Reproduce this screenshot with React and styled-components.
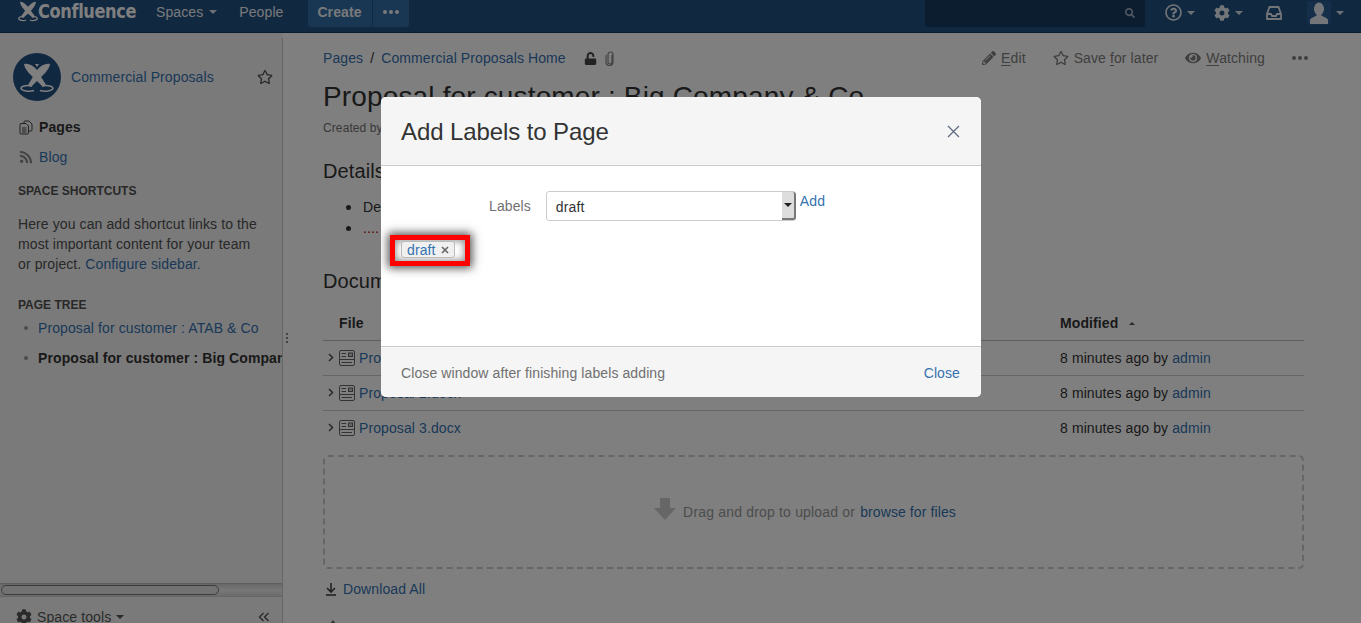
import React from "react";
import styled, { createGlobalStyle } from "styled-components";
import { FaCog, FaEye, FaPencilAlt, FaRegQuestionCircle, FaRegStar, FaRss, FaSearch, FaUnlock } from "react-icons/fa";

const Global = createGlobalStyle`
  html, body { margin: 0; padding: 0; height: 100%; overflow: hidden; }
  body { font-family: "Liberation Sans", Arial, sans-serif; font-size: 14px; letter-spacing: 0.1px; color: #333; background: #fff; }
  * { box-sizing: border-box; }
  a { color: #3572b0; text-decoration: none; }
`;

const Page = styled.div`
  position: relative;
  width: 1361px;
  height: 623px;
  overflow: hidden;
  display: flex;
  flex-direction: column;
`;

const Header = styled.header`
  height: 33px;
  flex: none;
  background: #205081;
  border-bottom: 1px solid #14375c;
  display: flex;
  align-items: flex-start;
  padding-left: 18px;
  color: #f0f3f7;
`;

const Brand = styled.div`
  display: flex;
  align-items: center;
  height: 22px;
  width: 138px;
  color: #fff;
`;

const BrandText = styled.span`
  display: inline-block;
  font-family: "DejaVu Sans Condensed", "DejaVu Sans", sans-serif;
  font-weight: 700;
  font-size: 20px;
  letter-spacing: -0.4px;
  transform: scaleX(0.9);
  transform-origin: left center;
  margin-left: 0;
`;

const NavItem = styled.div`
  height: 24px;
  line-height: 24px;
  margin-right: ${(p) => p.$gap}px;
  display: flex;
  align-items: center;
  gap: 6px;
`;

const Caret = styled.span`
  display: inline-block;
  width: 0;
  height: 0;
  border-left: 4px solid transparent;
  border-right: 4px solid transparent;
  border-top: 4px solid ${(p) => p.$color || "#dbe2ea"};
`;

const CreateGroup = styled.div`
  display: flex;
  height: 27px;
  background: #326ca6;
  border-radius: 0 0 3px 3px;
  font-weight: 700;
  line-height: 24px;
  color: #f0f3f7;
`;

const CreateBtn = styled.div`
  width: 65px;
  text-align: center;
  border-right: 1px solid #205081;
`;

const MoreBtn = styled.div`
  width: 36px;
  display: flex;
  align-items: center;
  justify-content: center;
  gap: 2px;
  height: 24px;
`;

const Dot = styled.i`
  display: block;
  width: 4px;
  height: 4px;
  border-radius: 50%;
  background: ${(p) => p.$color || "#f0f3f7"};
`;

const HeaderRight = styled.div`
  margin-left: auto;
  display: flex;
  align-items: flex-start;
  color: #e6ebf1;
`;

const Search = styled.div`
  width: 220px;
  height: 27px;
  background: #173a5e;
  border-radius: 0 0 3px 3px;
  display: flex;
  align-items: center;
  justify-content: flex-end;
  padding: 0 10px 1px 0;
  margin-right: 20px;
  color: #a9b6c5;
`;

const HeaderIcon = styled.div`
  height: 25px;
  display: flex;
  align-items: center;
  gap: 5px;
  margin-right: ${(p) => p.$gap}px;
`;

const AvatarBox = styled.div`
  width: 24px;
  height: 24px;
  background: #2a5d92;
  border-radius: 0 0 3px 3px;
  display: flex;
  align-items: center;
  justify-content: center;
  overflow: hidden;
`;

const Body = styled.div`
  flex: 1;
  display: flex;
  min-height: 0;
`;

const Sidebar = styled.aside`
  position: relative;
  width: 283px;
  flex: none;
  background: #f5f5f5;
  padding-right: 1px;
  display: flex;
  flex-direction: column;
  &::after {
    content: "";
    position: absolute;
    right: 0;
    top: 5px;
    bottom: 0;
    width: 1px;
    background: #ccc;
  }
`;

const SideScroll = styled.div`
  flex: 1;
  overflow: hidden;
  min-height: 0;
`;

const SpaceHead = styled.div`
  display: flex;
  align-items: center;
  padding: 20px 9px 0 13px;
`;

const SpaceName = styled.a`
  margin-left: 10px;
  flex: 1;
`;

const StarWrap = styled.span`
  color: #555;
  display: flex;
`;

const SideLink = styled.div`
  display: flex;
  align-items: center;
  gap: 6px;
  height: 20px;
  padding-left: 19px;
  margin-top: ${(p) => p.$top}px;
  font-weight: ${(p) => (p.$bold ? 700 : 400)};
`;

const SideHeading = styled.div`
  font-size: 12px;
  font-weight: 700;
  letter-spacing: 0;
  color: #505050;
  padding-left: 18px;
  margin-top: ${(p) => p.$top}px;
  line-height: 16px;
`;

const SideText = styled.p`
  margin: 15px 0 0;
  padding: 0 22px 0 18px;
  line-height: 20px;
  color: #505050;
`;

const TreeList = styled.ul`
  list-style: none;
  margin: 5px 0 0;
  padding: 0 0 0 38px;
  white-space: nowrap;
`;

const TreeItem = styled.li`
  position: relative;
  line-height: 20px;
  margin-bottom: 10px;
  font-weight: ${(p) => (p.$active ? 700 : 400)};
  &::before {
    content: "";
    position: absolute;
    left: -14px;
    top: 8px;
    width: 4px;
    height: 4px;
    border-radius: 50%;
    background: #999;
  }
`;

const ScrollTrack = styled.div`
  flex: none;
  height: 14px;
  background: linear-gradient(#d0d0d0, #f0f0f0 50%, #d8d8d8);
  border-top: 1px solid #bbb;
  border-bottom: 1px solid #ccc;
  padding: 1px 0 0 1px;
`;

const ScrollThumb = styled.div`
  width: 218px;
  height: 10px;
  background: #e4e4e4;
  border: 1px solid #777;
  border-radius: 5px;
`;

const SideFooter = styled.div`
  flex: none;
  height: 26px;
  padding: 14px 12px 0 16px;
  display: flex;
  align-items: center;
  gap: 5px;
  color: #555;
`;

const Collapse = styled.span`
  margin-left: auto;
  display: flex;
  color: #555;
`;

const Grip = styled.div`
  position: absolute;
  right: -5px;
  top: 300px;
  display: flex;
  flex-direction: column;
  gap: 2px;
  i { display: block; width: 2px; height: 2px; background: #888; }
`;

const Main = styled.main`
  flex: 1;
  padding: 14px 57px 0 40px;
  min-width: 0;
  overflow: hidden;
`;

const TopRow = styled.div`
  display: flex;
  align-items: center;
  height: 22px;
`;

const Crumbs = styled.div`
  display: flex;
  align-items: center;
  gap: 7px;
`;

const PageIcons = styled.span`
  display: flex;
  align-items: center;
  gap: 8px;
  margin-left: 11px;
  color: #444;
`;

const Actions = styled.div`
  margin-left: auto;
  display: flex;
  align-items: center;
  color: #808080;
  margin-right: -4px;
`;

const Action = styled.div`
  display: flex;
  align-items: center;
  gap: 5px;
  margin-right: ${(p) => p.$gap}px;
  u { text-underline-offset: 2px; }
`;

const Dots = styled.div`
  display: flex;
  gap: 2px;
`;

const Title = styled.h1`
  margin: 10px 0 0;
  font-weight: 400;
  font-size: 28px;
  letter-spacing: 0.15px;
  line-height: 36px;
  white-space: nowrap;
`;

const Byline = styled.div`
  font-size: 12px;
  color: #707070;
  line-height: 16px;
  margin-top: 5px;
`;

const H2 = styled.h2`
  margin: ${(p) => p.$top}px 0 0;
  font-weight: 400;
  font-size: 20px;
  line-height: 24px;
`;

const Bullets = styled.ul`
  margin: 13px 0 0;
  padding-left: 40px;
  line-height: 21px;
  li { height: 21px; }
  li::marker { font-size: 18px; }
`;

const RedLink = styled.a`
  color: #b40000;
`;

const Table = styled.div`
  margin-top: 15px;
`;

const Row = styled.div`
  display: grid;
  grid-template-columns: 737px 1fr;
  height: 35px;
  align-items: center;
  border-bottom: 1px solid #ccc;
  &:last-child { border-bottom: 0; padding-bottom: 1px; }
`;

const HeadRow = styled(Row)`
  height: 33px;
  padding-bottom: 2px;
  font-weight: 700;
  border-bottom: 1px solid #bbb;
`;

const FileCell = styled.div`
  display: flex;
  align-items: center;
  padding-left: 16px;
  gap: 4px;
`;

const HeadFile = styled.div`
  padding-left: 16px;
`;

const Chevron = styled.span`
  display: flex;
  margin-left: -11px;
  margin-right: 1px;
  margin-top: -2px;
  color: #555;
`;

const SortMark = styled.span`
  display: inline-block;
  margin-left: 11px;
  width: 0;
  height: 0;
  border-left: 3px solid transparent;
  border-right: 3px solid transparent;
  border-bottom: 3px solid #555;
  vertical-align: 3px;
`;

const Drop = styled.div`
  margin-top: 9px;
  height: 114px;
  padding-right: 18px;
  border: 2px dashed #ccc;
  border-radius: 5px;
  display: flex;
  align-items: center;
  justify-content: center;
  gap: 5px;
  color: #999;
`;

const DropText = styled.span`
  letter-spacing: 0.18px;
`;

const DropArrow = styled.svg`
  margin-right: 1px;
  margin-top: -7px;
`;

const DownloadRow = styled.div`
  display: flex;
  align-items: center;
  gap: 6px;
  margin-top: 10px;
  padding-left: 2px;
  height: 20px;
`;

const NextHint = styled.div`
  margin: 21px 0 0 7px;
  width: 0;
  height: 0;
  border-left: 3px solid transparent;
  border-right: 3px solid transparent;
  border-bottom: 4px solid #666;
`;

const Blanket = styled.div`
  position: absolute;
  inset: 0;
  background: rgba(0, 0, 0, 0.5);
`;

const Dialog = styled.div`
  position: absolute;
  left: 381px;
  top: 97px;
  width: 600px;
  height: 300px;
  background: #fff;
  border-radius: 5px;
  display: flex;
  flex-direction: column;
  overflow: hidden;
`;

const DialogHead = styled.div`
  height: 69px;
  flex: none;
  background: #f5f5f5;
  border-bottom: 1px solid #ccc;
  display: flex;
  align-items: center;
  justify-content: space-between;
  padding: 2px 21px 0 20px;
  h2 { margin: 0; font-weight: 400; font-size: 24px; letter-spacing: -0.1px; color: #333; }
`;

const CloseIcon = styled.svg`
  display: block;
  margin-top: -2px;
`;

const DialogBody = styled.div`
  flex: 1;
`;

const FormRow = styled.div`
  display: flex;
  align-items: flex-start;
  padding: 25px 0 0 108px;
`;

const FormLabel = styled.label`
  color: #707070;
  line-height: 30px;
  margin-right: 15px;
`;

const Combo = styled.div`
  position: relative;
  width: 250px;
  height: 30px;
  border: 1px solid #ccc;
  border-radius: 3px;
  line-height: 30px;
  padding-left: 9px;
  color: #333;
`;

const ComboArrow = styled.div`
  position: absolute;
  right: -1px;
  top: 0;
  bottom: 0;
  width: 14px;
  background: #ddd;
  border-right: 2px solid #777;
  border-bottom: 2px solid #777;
  border-radius: 0 3px 3px 0;
  display: flex;
  align-items: center;
  justify-content: center;
`;

const AddLink = styled.a`
  margin-left: 4px;
  line-height: 20px;
`;

const Highlight = styled.div`
  display: inline-flex;
  margin: 14px 0 0 9px;
  padding: 1px 10px 3px 6px;
  border: 5px solid #ff0000;
  background: #fff;
  box-shadow: 0 0 9px 2px rgba(0, 0, 0, 0.7), inset 0 0 7px 1px rgba(0, 0, 0, 0.45);
`;

const Tag = styled.span`
  display: inline-flex;
  align-items: center;
  gap: 5px;
  height: 17px;
  padding: 0 5px;
  border: 1px solid #bbb;
  border-radius: 3px;
  background: #f0f0f0;
  color: #3572b0;
`;

const TagX = styled.svg`
  display: block;
`;

const DialogFoot = styled.div`
  height: 51px;
  flex: none;
  background: #f5f5f5;
  border-top: 1px solid #ccc;
  display: flex;
  align-items: center;
  justify-content: space-between;
  padding: 2px 21px 0 20px;
  color: #707070;
`;

const SpaceLogo = styled.div`
  width: 48px;
  height: 48px;
  flex: none;
  border-radius: 50%;
  background: #205081;
`;

const Swords = ({ size, color }) => (
  <svg width={size} height={size} viewBox="0 0 48 48" fill={color} style={{ display: "block" }}>
    <path d="M11 11 C15 10 20 12 24 17 L33 32 L30 34 L22 26 C17 21 12 17 11 11 Z" />
    <path d="M37 11 C33 10 28 12 24 17 L15 32 L18 34 L26 26 C31 21 36 17 37 11 Z" />
    <path d="M22 11 H26 L24 14 Z" />
    <path d="M19 33 C13 32 8 33 8 35.5 C9 38 16 39 21 37.5 M29 33 C35 32 40 33 40 35.5 C39 38 32 39 27 37.5" fill="none" stroke={color} strokeWidth="1.5" />
  </svg>
);

const HeaderSwords = () => (
  <svg width="20" height="21" viewBox="8 8 32 33" fill="#fff" style={{ display: "block" }}>
    <path d="M11 9 C15 9 20 12 24 17 L35 32 L32 35 L22 26 C17 21 12 16 11 9 Z" />
    <path d="M37 9 C33 9 28 12 24 17 L13 32 L16 35 L26 26 C31 21 36 16 37 9 Z" />
    <path d="M18 33 C13 32 9 33 9 36 C10 39 17 40 21 38 M30 33 C35 32 39 33 39 36 C38 39 31 40 27 38" fill="none" stroke="#fff" strokeWidth="2" />
  </svg>
);

const InboxIcon = () => (
  <svg width="16" height="14" viewBox="0 0 16 14" fill="none" stroke="#e6ebf1" strokeWidth="1.8" style={{ display: "block" }}>
    <path d="M3.5 1 H12.5 L15 8 V13 H1 V8 Z" />
    <path d="M1 8 H5 L6 10 H10 L11 8 H15" />
  </svg>
);

const AvatarIcon = () => (
  <svg width="20" height="22" viewBox="0 0 20 22" fill="#e6ebf1" style={{ display: "block" }}>
    <ellipse cx="10" cy="7" rx="5" ry="6.5" />
    <path d="M1 22 V18 C1 16 6 15 8 13 H12 C14 15 19 16 19 18 V22 Z" />
  </svg>
);

const PagesIcon = () => (
  <svg width="14" height="15" viewBox="0 0 14 15" fill="none" stroke="#444" strokeWidth="1">
    <path d="M1 4.5 Q1 3.5 2 3.5 H7 L9.5 6 V13 Q9.5 14 8.5 14 H2 Q1 14 1 13 Z" />
    <path d="M5 3.5 V2 Q5 1 6 1 H10 L13 4 V10 Q13 11 12 11 H9.5" />
    <path d="M3 8 H7.5 M3 10 H7.5 M3 12 H7.5" />
  </svg>
);

const ClipIcon = () => (
  <svg width="10" height="15" viewBox="0 0 10 15" fill="none" stroke="#888" strokeWidth="1.2">
    <path d="M7 4 V11 A2 2 0 0 1 3 11 V3.5 A2.5 2.5 0 0 1 8 3.5 V11 A3.5 3.5 0 0 1 1 11 V4" />
  </svg>
);

const FileIcon = () => (
  <svg width="16" height="16" viewBox="0 0 16 16" fill="none" stroke="#666" strokeWidth="1">
    <rect x="0.5" y="0.5" width="15" height="15" rx="1.5" />
    <path d="M2.5 3.5 H7 M2.5 6.5 H7 M0.5 9.5 H15.5 M2.5 12.5 H13" />
    <rect x="9.5" y="3" width="4" height="3.5" fill="#ccc" />
  </svg>
);

const ChevronIcon = () => (
  <svg width="6" height="9" viewBox="0 0 6 9" fill="none" stroke="currentColor" strokeWidth="1.5">
    <path d="M1 1 L4.5 4.5 L1 8" />
  </svg>
);

const files = ["Proposal 1.docx", "Proposal 2.docx", "Proposal 3.docx"];

const App = () => (
  <Page>
    <Global />
    <Header>
      <Brand>
        <HeaderSwords />
        <BrandText>Confluence</BrandText>
      </Brand>
      <NavItem $gap={22}>Spaces <Caret /></NavItem>
      <NavItem $gap={24}>People</NavItem>
      <CreateGroup>
        <CreateBtn>Create</CreateBtn>
        <MoreBtn><Dot /><Dot /><Dot /></MoreBtn>
      </CreateGroup>
      <HeaderRight>
        <Search><FaSearch size={10} /></Search>
        <HeaderIcon $gap={19}><FaRegQuestionCircle size={17} /><Caret /></HeaderIcon>
        <HeaderIcon $gap={23}><FaCog size={16} /><Caret /></HeaderIcon>
        <HeaderIcon $gap={25}><InboxIcon /></HeaderIcon>
        <HeaderIcon $gap={17}><AvatarBox><AvatarIcon /></AvatarBox><Caret /></HeaderIcon>
      </HeaderRight>
    </Header>
    <Body>
      <Sidebar>
        <SideScroll>
          <SpaceHead>
            <SpaceLogo><Swords size={48} color="#fff" /></SpaceLogo>
            <SpaceName>Commercial Proposals</SpaceName>
            <StarWrap><FaRegStar size={16} /></StarWrap>
          </SpaceHead>
          <SideLink $top={16} $bold><PagesIcon /> Pages</SideLink>
          <SideLink $top={10}><FaRss size={14} color="#888" /> <a>Blog</a></SideLink>
          <SideHeading $top={16}>SPACE SHORTCUTS</SideHeading>
          <SideText>
            Here you can add shortcut links to the most important content for your team or project. <a>Configure sidebar.</a>
          </SideText>
          <SideHeading $top={23}>PAGE TREE</SideHeading>
          <TreeList>
            <TreeItem><a>Proposal for customer : ATAB &amp; Co</a></TreeItem>
            <TreeItem $active>Proposal for customer : Big Company &amp; Co</TreeItem>
          </TreeList>
        </SideScroll>
        <ScrollTrack><ScrollThumb /></ScrollTrack>
        <SideFooter>
          <FaCog size={16} /> Space tools <Caret $color="#555" />
          <Collapse>
            <svg width="12" height="10" viewBox="0 0 12 10" fill="none" stroke="currentColor" strokeWidth="1.4">
              <path d="M5.5 1 L1.5 5 L5.5 9 M10.5 1 L6.5 5 L10.5 9" />
            </svg>
          </Collapse>
        </SideFooter>
        <Grip><i /><i /><i /></Grip>
      </Sidebar>
      <Main>
        <TopRow>
          <Crumbs>
            <a>Pages</a> / <a>Commercial Proposals Home</a>
            <PageIcons><FaUnlock size={13} /><ClipIcon /></PageIcons>
          </Crumbs>
          <Actions>
            <Action $gap={27}><FaPencilAlt size={14} /><span><u>E</u>dit</span></Action>
            <Action $gap={27}><FaRegStar size={16} /><span>Save <u>f</u>or later</span></Action>
            <Action $gap={27}><FaEye size={16} /><span><u>W</u>atching</span></Action>
            <Dots><Dot $color="#808080" /><Dot $color="#808080" /><Dot $color="#808080" /></Dots>
          </Actions>
        </TopRow>
        <Title>Proposal for customer : Big Company &amp; Co</Title>
        <Byline>Created by admin</Byline>
        <H2 $top={23}>Details</H2>
        <Bullets>
          <li>Details</li>
          <li><RedLink>....</RedLink></li>
        </Bullets>
        <H2 $top={31}>Documents</H2>
        <Table>
          <HeadRow>
            <HeadFile>File</HeadFile>
            <div>Modified<SortMark /></div>
          </HeadRow>
          {files.map((name) => (
            <Row key={name}>
              <FileCell>
                <Chevron><ChevronIcon /></Chevron>
                <FileIcon />
                <a>{name}</a>
              </FileCell>
              <div>8 minutes ago by <a>admin</a></div>
            </Row>
          ))}
        </Table>
        <Drop>
          <DropArrow width="24" height="24" viewBox="0 0 24 24" fill="#ccc">
            <path d="M7 1 H17 V11 H23 L12 23 L1 11 H7 Z" />
          </DropArrow>
          <DropText>Drag and drop to upload or</DropText> <a>browse for files</a>
        </Drop>
        <DownloadRow>
          <svg width="12" height="13" viewBox="0 0 12 13" fill="none" stroke="#444">
            <path d="M6 0 V8 M2 5 L6 9 L10 5" strokeWidth="1.6" />
            <path d="M1 12 H11" strokeWidth="1.6" />
          </svg>
          <a>Download All</a>
        </DownloadRow>
        <NextHint />
      </Main>
    </Body>
    <Blanket />
    <Dialog>
      <DialogHead>
        <h2>Add Labels to Page</h2>
        <CloseIcon width="13" height="13" viewBox="0 0 13 13" stroke="#5e6c84" strokeWidth="1.3">
          <path d="M1 1 L12 12 M12 1 L1 12" />
        </CloseIcon>
      </DialogHead>
      <DialogBody>
        <FormRow>
          <FormLabel>Labels</FormLabel>
          <Combo>
            draft
            <ComboArrow><Caret $color="#222" /></ComboArrow>
          </Combo>
          <AddLink>Add</AddLink>
        </FormRow>
        <Highlight>
          <Tag>
            draft
            <TagX width="8" height="8" viewBox="0 0 8 8" stroke="#666" strokeWidth="1.6">
              <path d="M1 1 L7 7 M7 1 L1 7" />
            </TagX>
          </Tag>
        </Highlight>
      </DialogBody>
      <DialogFoot>
        <span>Close window after finishing labels adding</span>
        <a>Close</a>
      </DialogFoot>
    </Dialog>
  </Page>
);

export default App;
